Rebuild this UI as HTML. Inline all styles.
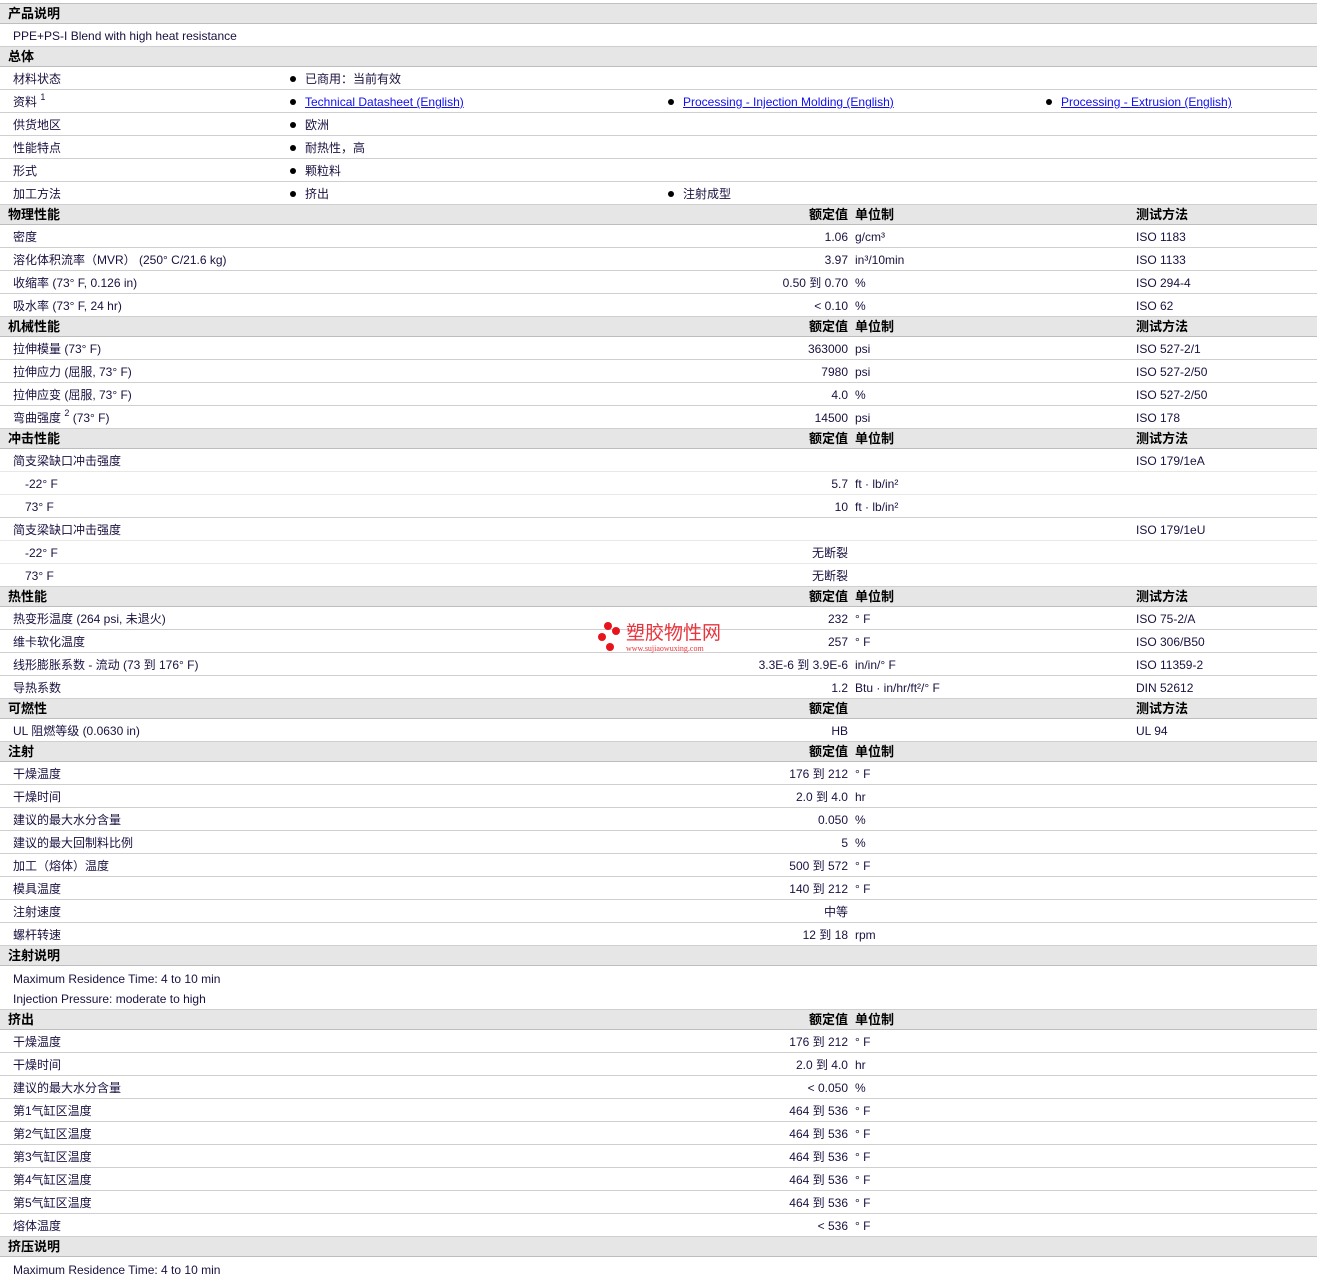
<!DOCTYPE html>
<html><head><meta charset="utf-8"><style>
body{margin:0;background:#fff;font-family:"Liberation Sans","Noto Sans CJK SC",sans-serif;font-size:12px;color:#1a1040;width:1317px;overflow:hidden}
.top{height:3px;border-bottom:1px solid #c0c0c0}
.h{position:relative;height:19px;line-height:20px;background:#e6e6e6;border-bottom:1px solid #bdbdbd;font-weight:bold;font-size:13px;color:#000}
.r{position:relative;height:22px;line-height:25px;border-bottom:1px solid #cfcfcf}
.r.s{border-bottom:1px solid #e8e8e8}
.n{position:relative;height:20px;line-height:22px}
.l{position:absolute;left:13px;white-space:nowrap}
.h .l{left:8px}
.i{left:25px}
.v{position:absolute;right:469px;white-space:nowrap}
.u{position:absolute;left:855px;white-space:nowrap}
.t{position:absolute;left:1136px;white-space:nowrap}
.b{position:absolute;white-space:nowrap}
.b:before{content:"";display:inline-block;width:6px;height:6px;border-radius:50%;background:#000;margin-right:9px;vertical-align:1px}
a{color:#1010ee;text-decoration:underline}
sup{font-size:9px;line-height:0;position:relative;top:-1px}
.wm{position:absolute;left:596px;top:621px;width:140px;height:36px}
</style></head><body>
<div class="top"></div>
<div class="h"><span class="l">产品说明</span></div>
<div class="r"><span class="l">PPE+PS-I Blend with high heat resistance</span></div>
<div class="h"><span class="l">总体</span></div>
<div class="r"><span class="l">材料状态</span><span class="b" style="left:290px">已商用：当前有效</span></div>
<div class="r"><span class="l">资料 <sup>1</sup></span><span class="b" style="left:290px"><a>Technical Datasheet (English)</a></span><span class="b" style="left:668px"><a>Processing - Injection Molding (English)</a></span><span class="b" style="left:1046px"><a>Processing - Extrusion (English)</a></span></div>
<div class="r"><span class="l">供货地区</span><span class="b" style="left:290px">欧洲</span></div>
<div class="r"><span class="l">性能特点</span><span class="b" style="left:290px">耐热性，高</span></div>
<div class="r"><span class="l">形式</span><span class="b" style="left:290px">颗粒料</span></div>
<div class="r"><span class="l">加工方法</span><span class="b" style="left:290px">挤出</span><span class="b" style="left:668px">注射成型</span></div>
<div class="h"><span class="l">物理性能</span><span class="v">额定值</span><span class="u">单位制</span><span class="t">测试方法</span></div>
<div class="r"><span class="l">密度</span><span class="v">1.06</span><span class="u">g/cm³</span><span class="t">ISO 1183</span></div>
<div class="r"><span class="l">溶化体积流率（MVR） (250° C/21.6 kg)</span><span class="v">3.97</span><span class="u">in³/10min</span><span class="t">ISO 1133</span></div>
<div class="r"><span class="l">收缩率 (73° F, 0.126 in)</span><span class="v">0.50 到 0.70</span><span class="u">%</span><span class="t">ISO 294-4</span></div>
<div class="r"><span class="l">吸水率 (73° F, 24 hr)</span><span class="v">&lt; 0.10</span><span class="u">%</span><span class="t">ISO 62</span></div>
<div class="h"><span class="l">机械性能</span><span class="v">额定值</span><span class="u">单位制</span><span class="t">测试方法</span></div>
<div class="r"><span class="l">拉伸模量 (73° F)</span><span class="v">363000</span><span class="u">psi</span><span class="t">ISO 527-2/1</span></div>
<div class="r"><span class="l">拉伸应力 (屈服, 73° F)</span><span class="v">7980</span><span class="u">psi</span><span class="t">ISO 527-2/50</span></div>
<div class="r"><span class="l">拉伸应变 (屈服, 73° F)</span><span class="v">4.0</span><span class="u">%</span><span class="t">ISO 527-2/50</span></div>
<div class="r"><span class="l">弯曲强度 <sup>2</sup> (73° F)</span><span class="v">14500</span><span class="u">psi</span><span class="t">ISO 178</span></div>
<div class="h"><span class="l">冲击性能</span><span class="v">额定值</span><span class="u">单位制</span><span class="t">测试方法</span></div>
<div class="r s"><span class="l">简支梁缺口冲击强度</span><span class="t">ISO 179/1eA</span></div>
<div class="r s"><span class="l i">-22° F</span><span class="v">5.7</span><span class="u">ft · lb/in²</span></div>
<div class="r"><span class="l i">73° F</span><span class="v">10</span><span class="u">ft · lb/in²</span></div>
<div class="r s"><span class="l">简支梁缺口冲击强度</span><span class="t">ISO 179/1eU</span></div>
<div class="r s"><span class="l i">-22° F</span><span class="v">无断裂</span></div>
<div class="r"><span class="l i">73° F</span><span class="v">无断裂</span></div>
<div class="h"><span class="l">热性能</span><span class="v">额定值</span><span class="u">单位制</span><span class="t">测试方法</span></div>
<div class="r"><span class="l">热变形温度 (264 psi, 未退火)</span><span class="v">232</span><span class="u">° F</span><span class="t">ISO 75-2/A</span></div>
<div class="r"><span class="l">维卡软化温度</span><span class="v">257</span><span class="u">° F</span><span class="t">ISO 306/B50</span></div>
<div class="r"><span class="l">线形膨胀系数 - 流动 (73 到 176° F)</span><span class="v">3.3E-6 到 3.9E-6</span><span class="u">in/in/° F</span><span class="t">ISO 11359-2</span></div>
<div class="r"><span class="l">导热系数</span><span class="v">1.2</span><span class="u">Btu · in/hr/ft²/° F</span><span class="t">DIN 52612</span></div>
<div class="h"><span class="l">可燃性</span><span class="v">额定值</span><span class="t">测试方法</span></div>
<div class="r"><span class="l">UL 阻燃等级 (0.0630 in)</span><span class="v">HB</span><span class="t">UL 94</span></div>
<div class="h"><span class="l">注射</span><span class="v">额定值</span><span class="u">单位制</span></div>
<div class="r"><span class="l">干燥温度</span><span class="v">176 到 212</span><span class="u">° F</span></div>
<div class="r"><span class="l">干燥时间</span><span class="v">2.0 到 4.0</span><span class="u">hr</span></div>
<div class="r"><span class="l">建议的最大水分含量</span><span class="v">0.050</span><span class="u">%</span></div>
<div class="r"><span class="l">建议的最大回制料比例</span><span class="v">5</span><span class="u">%</span></div>
<div class="r"><span class="l">加工（熔体）温度</span><span class="v">500 到 572</span><span class="u">° F</span></div>
<div class="r"><span class="l">模具温度</span><span class="v">140 到 212</span><span class="u">° F</span></div>
<div class="r"><span class="l">注射速度</span><span class="v">中等</span></div>
<div class="r"><span class="l">螺杆转速</span><span class="v">12 到 18</span><span class="u">rpm</span></div>
<div class="h"><span class="l">注射说明</span></div>
<div style="height:2px"></div>
<div class="n"><span class="l">Maximum Residence Time: 4 to 10 min</span></div>
<div class="n" style="height:21px;border-bottom:1px solid #cfcfcf"><span class="l">Injection Pressure: moderate to high</span></div>
<div class="h"><span class="l">挤出</span><span class="v">额定值</span><span class="u">单位制</span></div>
<div class="r"><span class="l">干燥温度</span><span class="v">176 到 212</span><span class="u">° F</span></div>
<div class="r"><span class="l">干燥时间</span><span class="v">2.0 到 4.0</span><span class="u">hr</span></div>
<div class="r"><span class="l">建议的最大水分含量</span><span class="v">&lt; 0.050</span><span class="u">%</span></div>
<div class="r"><span class="l">第1气缸区温度</span><span class="v">464 到 536</span><span class="u">° F</span></div>
<div class="r"><span class="l">第2气缸区温度</span><span class="v">464 到 536</span><span class="u">° F</span></div>
<div class="r"><span class="l">第3气缸区温度</span><span class="v">464 到 536</span><span class="u">° F</span></div>
<div class="r"><span class="l">第4气缸区温度</span><span class="v">464 到 536</span><span class="u">° F</span></div>
<div class="r"><span class="l">第5气缸区温度</span><span class="v">464 到 536</span><span class="u">° F</span></div>
<div class="r"><span class="l">熔体温度</span><span class="v">&lt; 536</span><span class="u">° F</span></div>
<div class="h"><span class="l">挤压说明</span></div>
<div class="n" style="margin-top:2px"><span class="l">Maximum Residence Time: 4 to 10 min</span></div>
<div class="wm">
<svg width="30" height="34" style="position:absolute;left:0;top:0"><circle cx="12" cy="5" r="4" fill="#e8141c"/><circle cx="20" cy="10" r="4" fill="#e8141c"/><circle cx="6" cy="16" r="4" fill="#e8141c"/><circle cx="14" cy="26" r="4" fill="#e8141c"/></svg>
<span style="position:absolute;left:30px;top:3px;font-size:19px;color:#e8343c;line-height:20px">塑胶物性网</span>
<span style="position:absolute;left:30px;top:23px;font-size:8px;color:#e8343c;font-family:'Liberation Serif',serif;line-height:9px">www.sujiaowuxing.com</span>
</div>
</body></html>
